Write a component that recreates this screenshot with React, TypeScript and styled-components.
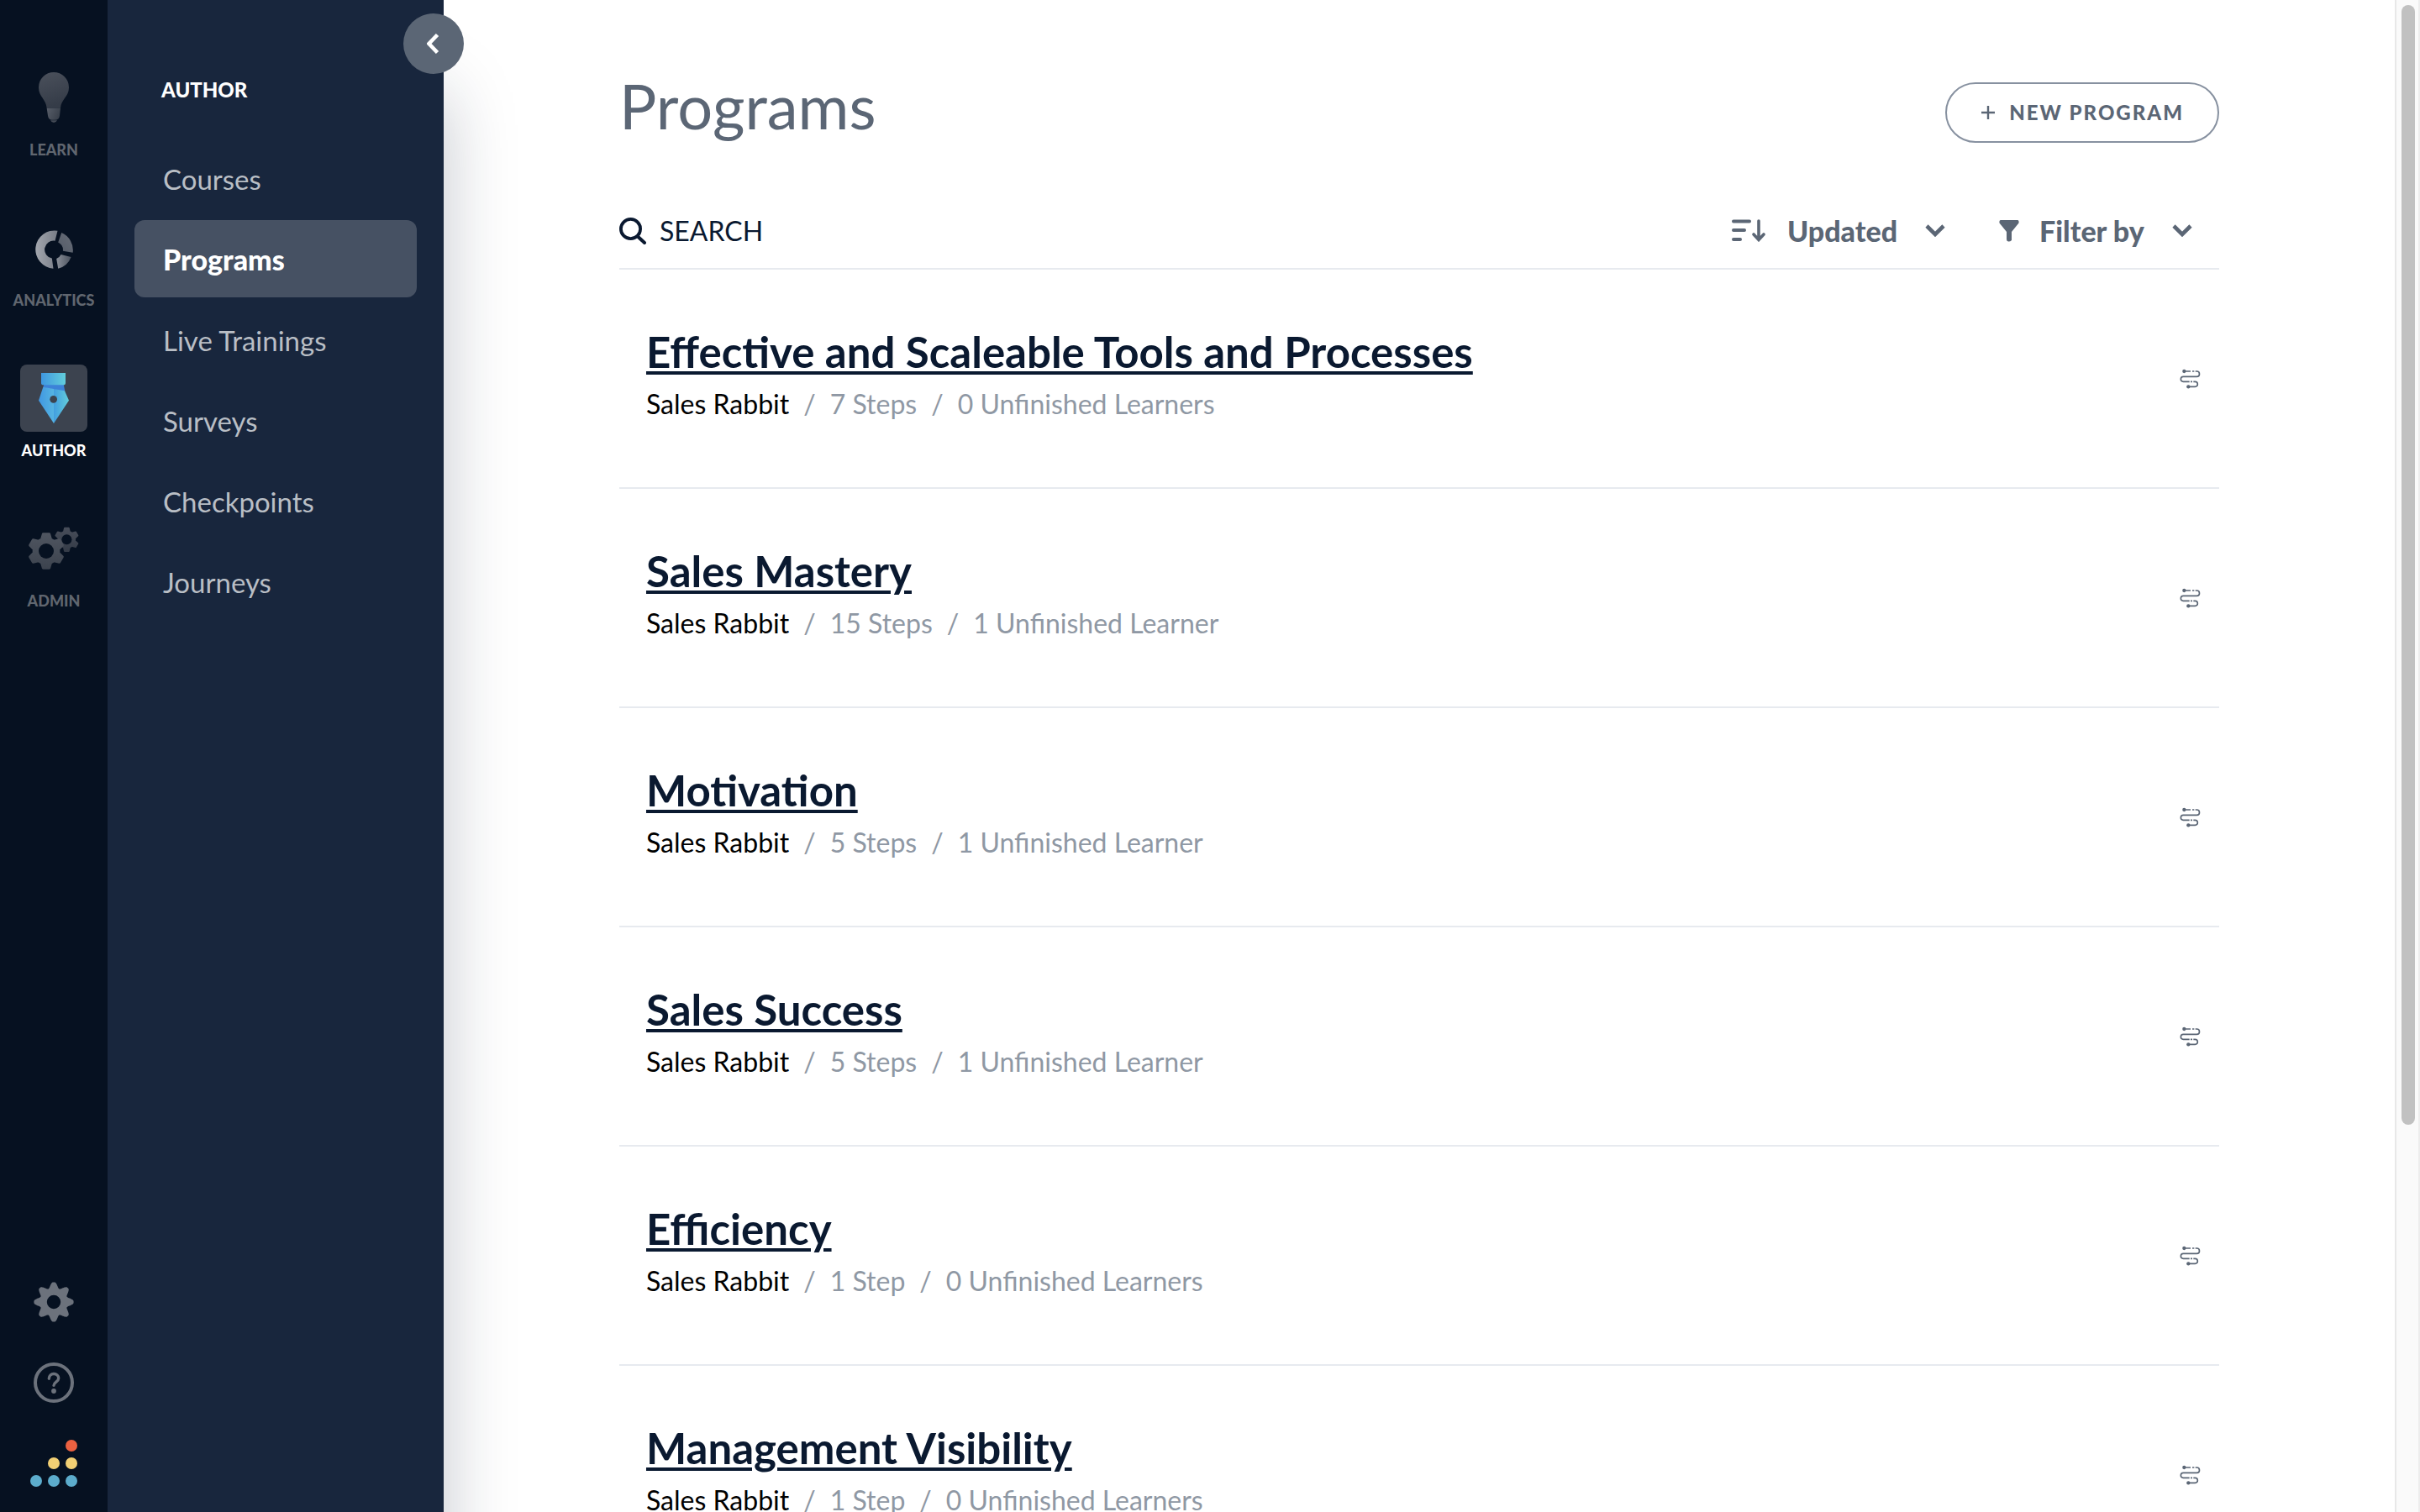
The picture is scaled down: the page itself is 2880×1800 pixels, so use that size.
import React from "react";
import styled, { createGlobalStyle } from "styled-components";

const color = {
  rail: "#061121",
  panel: "#18263d",
  panelActive: "#465163",
  slate: "#5b6675",
  ink: "#0a1930",
  muted: "#8f98a4",
  line: "#e7eaef",
  railText: "#60666f",
};

const GlobalStyle = createGlobalStyle`
  *, *::before, *::after { box-sizing: border-box; }
  html, body { margin: 0; padding: 0; }
  body {
    background: #fff;
    color: ${color.ink};
    font-family: Lato, "Open Sans", sans-serif;
    font-size: 32px;
    line-height: 40px;
  }
  button, input, select { font: inherit; color: inherit; }
  svg { display: block; flex: none; }
`;

const Shell = styled.div`
  display: flex;
  height: 100vh;
  overflow: hidden;
`;

/* ---------- Icon rail ---------- */

const Rail = styled.nav`
  flex: none;
  width: 128px;
  padding: 76px 0 30px;
  display: flex;
  flex-direction: column;
  justify-content: space-between;
  background: ${color.rail};
  z-index: 2;
`;

const RailGroup = styled.div<{ $gap: number }>`
  display: flex;
  flex-direction: column;
  align-items: center;
  gap: ${(p) => p.$gap}px;
`;

const RailLink = styled.a<{ $active?: boolean }>`
  display: flex;
  flex-direction: column;
  align-items: center;
  gap: 12px;
  color: ${(p) => (p.$active ? "#fff" : color.railText)};
  font-size: 18px;
  line-height: 20px;
  font-weight: 900;
  text-decoration: none;
`;

const RailIcon = styled.span<{ $active?: boolean }>`
  width: 80px;
  height: 80px;
  display: flex;
  align-items: center;
  justify-content: center;
  border-radius: 8px;
  background: ${(p) => (p.$active ? "#3c434f" : "transparent")};
`;

const RailButton = styled.button`
  width: 56px;
  height: 56px;
  padding: 0;
  display: flex;
  align-items: center;
  justify-content: center;
  border: 0;
  background: none;
  color: #6c727c;
`;

/* ---------- Section panel ---------- */

const Panel = styled.aside`
  position: relative;
  flex: none;
  width: 400px;
  padding: 93px 32px 0;
  background: ${color.panel};
  box-shadow: 0 110px 78px rgba(20, 32, 54, 0.25);
  z-index: 1;
`;

const PanelTitle = styled.h2`
  margin: 0 0 45px;
  padding-left: 32px;
  color: #fff;
  font-size: 24px;
  line-height: 28px;
  font-weight: 900;
`;

const PanelLinks = styled.div`
  display: flex;
  flex-direction: column;
  gap: 4px;
`;

const PanelLink = styled.a<{ $active?: boolean }>`
  height: 92px;
  padding: 2px 34px 0;
  display: flex;
  align-items: center;
  border-radius: 12px;
  background: ${(p) => (p.$active ? color.panelActive : "transparent")};
  color: ${(p) => (p.$active ? "#fff" : "#b9bec5")};
  font-size: ${(p) => (p.$active ? 34 : 33)}px;
  font-weight: ${(p) => (p.$active ? 900 : 400)};
  text-decoration: none;
`;

const CollapseButton = styled.button`
  position: absolute;
  top: 16px;
  right: -24px;
  width: 72px;
  height: 72px;
  padding: 0;
  display: flex;
  align-items: center;
  justify-content: center;
  border: 0;
  border-radius: 50%;
  background: ${color.slate};
  color: #fff;
`;

/* ---------- Main column ---------- */

const Main = styled.main`
  flex: 1;
  min-width: 0;
  padding-top: 82px;
  overflow: hidden;
`;

const Content = styled.div`
  width: 82%;
  margin: 0 auto;
  display: flex;
  flex-direction: column;
`;

const Header = styled.header`
  display: flex;
  align-items: flex-end;
  justify-content: space-between;
`;

const PageTitle = styled.h1`
  margin: 0;
  color: ${color.slate};
  font-size: 74px;
  line-height: 88px;
  font-weight: 400;
`;

const NewButton = styled.button`
  height: 72px;
  padding: 0 40px;
  display: flex;
  align-items: center;
  gap: 16px;
  border: 2px solid #8791a0;
  border-radius: 36px;
  background: #fff;
  color: ${color.slate};
  font-size: 24px;
  font-weight: 900;
  letter-spacing: 2px;
`;

const Toolbar = styled.div`
  min-height: 91px;
  margin-top: 60px;
  padding-right: 32px;
  display: flex;
  align-items: center;
  justify-content: space-between;
  border-bottom: 2px solid ${color.line};
`;

const SearchLabel = styled.label`
  flex: 1;
  display: flex;
  align-items: center;
  gap: 16px;
`;

const SearchInput = styled.input`
  flex: 1;
  min-width: 0;
  padding: 0;
  border: 0;
  outline: 0;
  background: none;
  &::placeholder {
    color: ${color.ink};
    opacity: 1;
  }
`;

const Filters = styled.div`
  display: flex;
  gap: 64px;
  color: ${color.slate};
`;

const SelectLabel = styled.label<{ $iconGap: number }>`
  display: flex;
  align-items: center;
  font-size: 34px;
  font-weight: 900;
  & > svg:first-child { margin-right: ${(p) => p.$iconGap}px; }
  & > svg:last-child { margin-left: 32px; }
`;

const Select = styled.select`
  appearance: none;
  padding: 0;
  border: 0;
  outline: 0;
  background: none;
`;

const List = styled.ul`
  margin: 0;
  padding: 0;
  list-style: none;
`;

const Row = styled.li`
  padding: 70px 22px 79px 32px;
  display: flex;
  align-items: center;
  justify-content: space-between;
  border-bottom: 2px solid ${color.line};
  color: ${color.slate};
  & > svg { margin-top: 10px; }
`;

const RowText = styled.div`
  display: flex;
  flex-direction: column;
  align-items: flex-start;
  gap: 14px;
`;

const RowTitle = styled.a`
  color: ${color.ink};
  font-size: 51px;
  line-height: 56px;
  font-weight: 700;
  text-decoration: underline;
  text-decoration-thickness: 4px;
  text-underline-offset: 4px;
`;

const Meta = styled.div`
  display: flex;
  gap: 17px;
  color: ${color.muted};
`;

const Owner = styled.span`
  color: #000;
`;

/* ---------- Scroll track ---------- */

const Track = styled.div`
  flex: none;
  width: 30px;
  padding: 6px 4px 0 6px;
  border-left: 2px solid #e8e8e8;
  border-right: 2px solid #ededed;
  background: #fafafa;
`;

const Thumb = styled.div`
  width: 16px;
  height: 74.3%;
  border-radius: 8px;
  background: #c1c1c1;
`;

/* ---------- Drawings ---------- */

const gearPoints = (cx: number, cy: number, root: number, tip: number, rootHalf: number, tipHalf: number) => {
  const pts: string[] = [];
  for (let i = 0; i < 6; i++) {
    const a = (i * Math.PI) / 3 - Math.PI / 2;
    [[root, -rootHalf], [tip, -tipHalf], [tip, tipHalf], [root, rootHalf]].forEach(([r, d]) =>
      pts.push(`${(cx + r * Math.cos(a + d)).toFixed(2)},${(cy + r * Math.sin(a + d)).toFixed(2)}`)
    );
  }
  return pts.join(" ");
};

const lobedGear = (() => {
  const pts: string[] = [];
  for (let i = 0; i < 240; i++) {
    const a = (i * Math.PI) / 120;
    const r = Math.min(23.6, 16.8 + 7.2 * ((1 + Math.cos(8 * a)) / 2));
    pts.push(`${(24 + r * Math.cos(a)).toFixed(2)} ${(24 + r * Math.sin(a)).toFixed(2)}`);
  }
  return `M${pts.join("L")}Z M32.2 24a8.2 8.2 0 1 0-16.4 0a8.2 8.2 0 1 0 16.4 0Z`;
})();

const Bulb = () => (
  <svg width="36" height="60" viewBox="138 78 108 180" aria-hidden="true">
    <defs>
      <linearGradient id="bulb" x1="0" y1="0" x2="0.3" y2="1">
        <stop offset="0" stopColor="#4b515c" />
        <stop offset="1" stopColor="#353c48" />
      </linearGradient>
      <linearGradient id="bulbBase" x1="0" y1="0" x2="1" y2="0.4">
        <stop offset="0" stopColor="#585e69" />
        <stop offset="1" stopColor="#3a414c" />
      </linearGradient>
    </defs>
    <path d="M192 78a54 54 0 0 1 54 54c0 34-28 42-30 74h-49c-2-32-29-40-29-74a54 54 0 0 1 54-54Z" fill="url(#bulb)" />
    <path d="M167 206h49l-3 27q-2 15-16 15h-11q-13 0-15-15Z" fill="url(#bulbBase)" />
    <path d="M180 250h24q-4 8-12 8t-12-8Z" fill="#444b56" />
  </svg>
);

const Donut = () => (
  <svg width="46" height="50" viewBox="128 632 137 149" aria-hidden="true">
    <defs>
      <linearGradient id="donutL" x1="0" y1="0" x2="1" y2="0">
        <stop offset="0" stopColor="#a3a7ae" />
        <stop offset="1" stopColor="#777c86" />
      </linearGradient>
      <linearGradient id="donutR" x1="1" y1="0" x2="0" y2="1">
        <stop offset="0" stopColor="#676d78" />
        <stop offset="1" stopColor="#545b67" />
      </linearGradient>
      <linearGradient id="donutB" x1="0" y1="0" x2="1" y2="0">
        <stop offset="0" stopColor="#8b9099" />
        <stop offset="1" stopColor="#4b525e" />
      </linearGradient>
    </defs>
    <path d="M210 646A67.5 67.5 0 1 0 195 780L190 744A31 31 0 0 1 201 682Z" fill="url(#donutL)" />
    <path d="M224 653A67.5 67.5 0 0 1 264 724L229 718A31 31 0 0 0 212 687Z" fill="url(#donutR)" />
    <path d="M258 739A67.5 67.5 0 0 1 212 780L206 745A31 31 0 0 0 222 730Z" fill="url(#donutB)" />
  </svg>
);

const Nib = () => (
  <svg width="36" height="60" viewBox="138 132 108 180" aria-hidden="true">
    <defs>
      <linearGradient id="nibCap" x1="0" y1="0" x2="1" y2="0">
        <stop offset="0" stopColor="#3f97e0" />
        <stop offset="1" stopColor="#62cddb" />
      </linearGradient>
      <linearGradient id="nibL" x1="0" y1="0" x2="1" y2="0">
        <stop offset="0" stopColor="#4097e2" />
        <stop offset="1" stopColor="#56b4e2" />
      </linearGradient>
      <linearGradient id="nibR" x1="0" y1="0" x2="1" y2="0">
        <stop offset="0" stopColor="#439fe0" />
        <stop offset="1" stopColor="#62cddb" />
      </linearGradient>
    </defs>
    <path d="M157 172h70l5 26-78-14Z" fill="#3c82d8" />
    <path d="M154 182L192 189V312L138 230Z" fill="url(#nibL)" />
    <path d="M192 189L231 196L246 230L192 312Z" fill="url(#nibR)" />
    <path d="M147 132h87v35q0 8-8 8h-71q-8 0-8-8Z" fill="url(#nibCap)" />
    <circle cx="191" cy="226" r="13" fill="#3c434f" />
  </svg>
);

const Gears = () => (
  <svg width="62" height="52" viewBox="33 627 62 52" aria-hidden="true">
    <defs>
      <linearGradient id="gearBig" x1="0" y1="0" x2="0" y2="1">
        <stop offset="0" stopColor="#4f5560" />
        <stop offset="1" stopColor="#3d444f" />
      </linearGradient>
      <linearGradient id="gearSmall" x1="0" y1="0" x2="0" y2="1">
        <stop offset="0" stopColor="#474d59" />
        <stop offset="1" stopColor="#353c48" />
      </linearGradient>
    </defs>
    <polygon points={gearPoints(79.4, 642.3, 9.8, 13.8, 0.36, 0.17)} fill="url(#gearSmall)" stroke="url(#gearSmall)" strokeWidth="2" strokeLinejoin="round" />
    <circle cx="79.4" cy="642.3" r="6" fill={color.rail} />
    <polygon points={gearPoints(55, 656, 15, 20.5, 0.37, 0.18)} fill="url(#gearBig)" stroke="url(#gearBig)" strokeWidth="3" strokeLinejoin="round" />
    <circle cx="55" cy="656" r="9" fill={color.rail} />
  </svg>
);

const SettingsIcon = () => (
  <svg width="48" height="48" viewBox="0 0 48 48" aria-hidden="true">
    <path d={lobedGear} fill="currentColor" fillRule="evenodd" />
  </svg>
);

const HelpIcon = () => (
  <svg width="48" height="48" viewBox="0 0 48 48" fill="none" stroke="currentColor" aria-hidden="true">
    <circle cx="24" cy="24" r="22" strokeWidth="4" />
    <path d="M18.3 19.2C18.5 15.6 21 13.5 24 13.5c3.2 0 5.7 2.1 5.7 5.2 0 4.3-5.6 4.4-5.7 8.6" strokeWidth="3.4" strokeLinecap="round" />
    <circle cx="24" cy="34" r="2.9" fill="currentColor" stroke="none" />
  </svg>
);

const Logo = () => (
  <svg width="56" height="56" viewBox="0 0 56 56" aria-hidden="true">
    <circle cx="49" cy="7" r="7" fill="#eb6141" />
    <g fill="#f2d074">
      <circle cx="28" cy="28" r="7" />
      <circle cx="49" cy="28" r="7" />
    </g>
    <g fill="#5caccc">
      <circle cx="7" cy="49" r="7" />
      <circle cx="28" cy="49" r="7" />
      <circle cx="49" cy="49" r="7" />
    </g>
  </svg>
);

const CollapseIcon = () => (
  <svg width="16" height="24" viewBox="1 0 16 24" fill="none" aria-hidden="true">
    <path d="M13.5 1.5L3.5 12L13.5 22.5" stroke="currentColor" strokeWidth="4.5" />
  </svg>
);

const SearchIcon = () => (
  <svg width="32" height="32" viewBox="0 0 32 32" fill="none" stroke="currentColor" aria-hidden="true">
    <circle cx="13.5" cy="13.5" r="11.6" strokeWidth="3.8" />
    <path d="M22 22.5L30 30" strokeWidth="4" strokeLinecap="round" />
  </svg>
);

const SortIcon = () => (
  <svg width="40" height="27" viewBox="0 0 40 27" fill="none" stroke="currentColor" strokeWidth="4" strokeLinecap="round" aria-hidden="true">
    <path d="M2 2.5H21M2 13H15M2 24H10" />
    <path d="M32 2V24M26 18L32 24.5L38 18" strokeWidth="3.6" />
  </svg>
);

const FilterIcon = () => (
  <svg width="24" height="26" viewBox="0 0 24 26" aria-hidden="true">
    <path d="M2 0H22Q24 0 23.5 3.5L15 14V24Q13 26 11 25.5Q9 25 9 23V14L.5 3.5Q0 0 2 0Z" fill="currentColor" />
  </svg>
);

const ChevronIcon = () => (
  <svg width="24" height="15" viewBox="0 0 24 15" fill="none" aria-hidden="true">
    <path d="M2 2L12 12L22 2" stroke="currentColor" strokeWidth="4.6" />
  </svg>
);

const PathIcon = () => (
  <svg width="25" height="24" viewBox="101 56 75 72" fill="none" stroke="currentColor" strokeWidth="5" aria-hidden="true">
    <path d="M117 65H140M146 65H153M157 65H162A9.5 9.5 0 0 1 162 84H114A9 9 0 0 0 114 102H136M140 102H146M150 102H156A9 9 0 0 1 156 120H132" />
    <circle cx="117" cy="65" r="6.5" fill="currentColor" stroke="none" />
    <circle cx="132" cy="120" r="6.5" fill="currentColor" stroke="none" />
  </svg>
);

/* ---------- Data ---------- */

const railItems = [
  { label: "LEARN", icon: <Bulb /> },
  { label: "ANALYTICS", icon: <Donut /> },
  { label: "AUTHOR", icon: <Nib />, active: true },
  { label: "ADMIN", icon: <Gears /> },
];

const panelItems = ["Courses", "Programs", "Live Trainings", "Surveys", "Checkpoints", "Journeys"];

const programs = [
  { title: "Effective and Scaleable Tools and Processes", steps: "7 Steps", learners: "0 Unfinished Learners" },
  { title: "Sales Mastery", steps: "15 Steps", learners: "1 Unfinished Learner" },
  { title: "Motivation", steps: "5 Steps", learners: "1 Unfinished Learner" },
  { title: "Sales Success", steps: "5 Steps", learners: "1 Unfinished Learner" },
  { title: "Efficiency", steps: "1 Step", learners: "0 Unfinished Learners" },
  { title: "Management Visibility", steps: "1 Step", learners: "0 Unfinished Learners" },
];

export default function App() {
  return (
    <Shell>
      <GlobalStyle />
      <Rail>
        <RailGroup $gap={67}>
          {railItems.map((item) => (
            <RailLink key={item.label} href="#" $active={item.active}>
              <RailIcon $active={item.active}>{item.icon}</RailIcon>
              {item.label}
            </RailLink>
          ))}
        </RailGroup>
        <RailGroup $gap={40}>
          <RailButton aria-label="Settings"><SettingsIcon /></RailButton>
          <RailButton aria-label="Help"><HelpIcon /></RailButton>
          <Logo />
        </RailGroup>
      </Rail>

      <Panel>
        <PanelTitle>AUTHOR</PanelTitle>
        <PanelLinks>
          {panelItems.map((name) => (
            <PanelLink key={name} href="#" $active={name === "Programs"}>{name}</PanelLink>
          ))}
        </PanelLinks>
        <CollapseButton aria-label="Collapse menu"><CollapseIcon /></CollapseButton>
      </Panel>

      <Main>
        <Content>
          <Header>
            <PageTitle>Programs</PageTitle>
            <NewButton>
              <svg width="18" height="18" viewBox="0 0 18 18" aria-hidden="true">
                <path d="M9 1V17M1 9H17" stroke="currentColor" strokeWidth="2.4" />
              </svg>
              NEW PROGRAM
            </NewButton>
          </Header>

          <Toolbar>
            <SearchLabel>
              <SearchIcon />
              <SearchInput type="text" placeholder="SEARCH" aria-label="Search" />
            </SearchLabel>
            <Filters>
              <SelectLabel $iconGap={26}>
                <SortIcon />
                <Select aria-label="Sort by"><option>Updated</option></Select>
                <ChevronIcon />
              </SelectLabel>
              <SelectLabel $iconGap={24}>
                <FilterIcon />
                <Select aria-label="Filter"><option>Filter by</option></Select>
                <ChevronIcon />
              </SelectLabel>
            </Filters>
          </Toolbar>

          <List>
            {programs.map((p) => (
              <Row key={p.title}>
                <RowText>
                  <RowTitle href="#">{p.title}</RowTitle>
                  <Meta>
                    <Owner>Sales Rabbit</Owner>
                    <span>/</span>
                    <span>{p.steps}</span>
                    <span>/</span>
                    <span>{p.learners}</span>
                  </Meta>
                </RowText>
                <PathIcon />
              </Row>
            ))}
          </List>
        </Content>
      </Main>

      <Track><Thumb /></Track>
    </Shell>
  );
}
